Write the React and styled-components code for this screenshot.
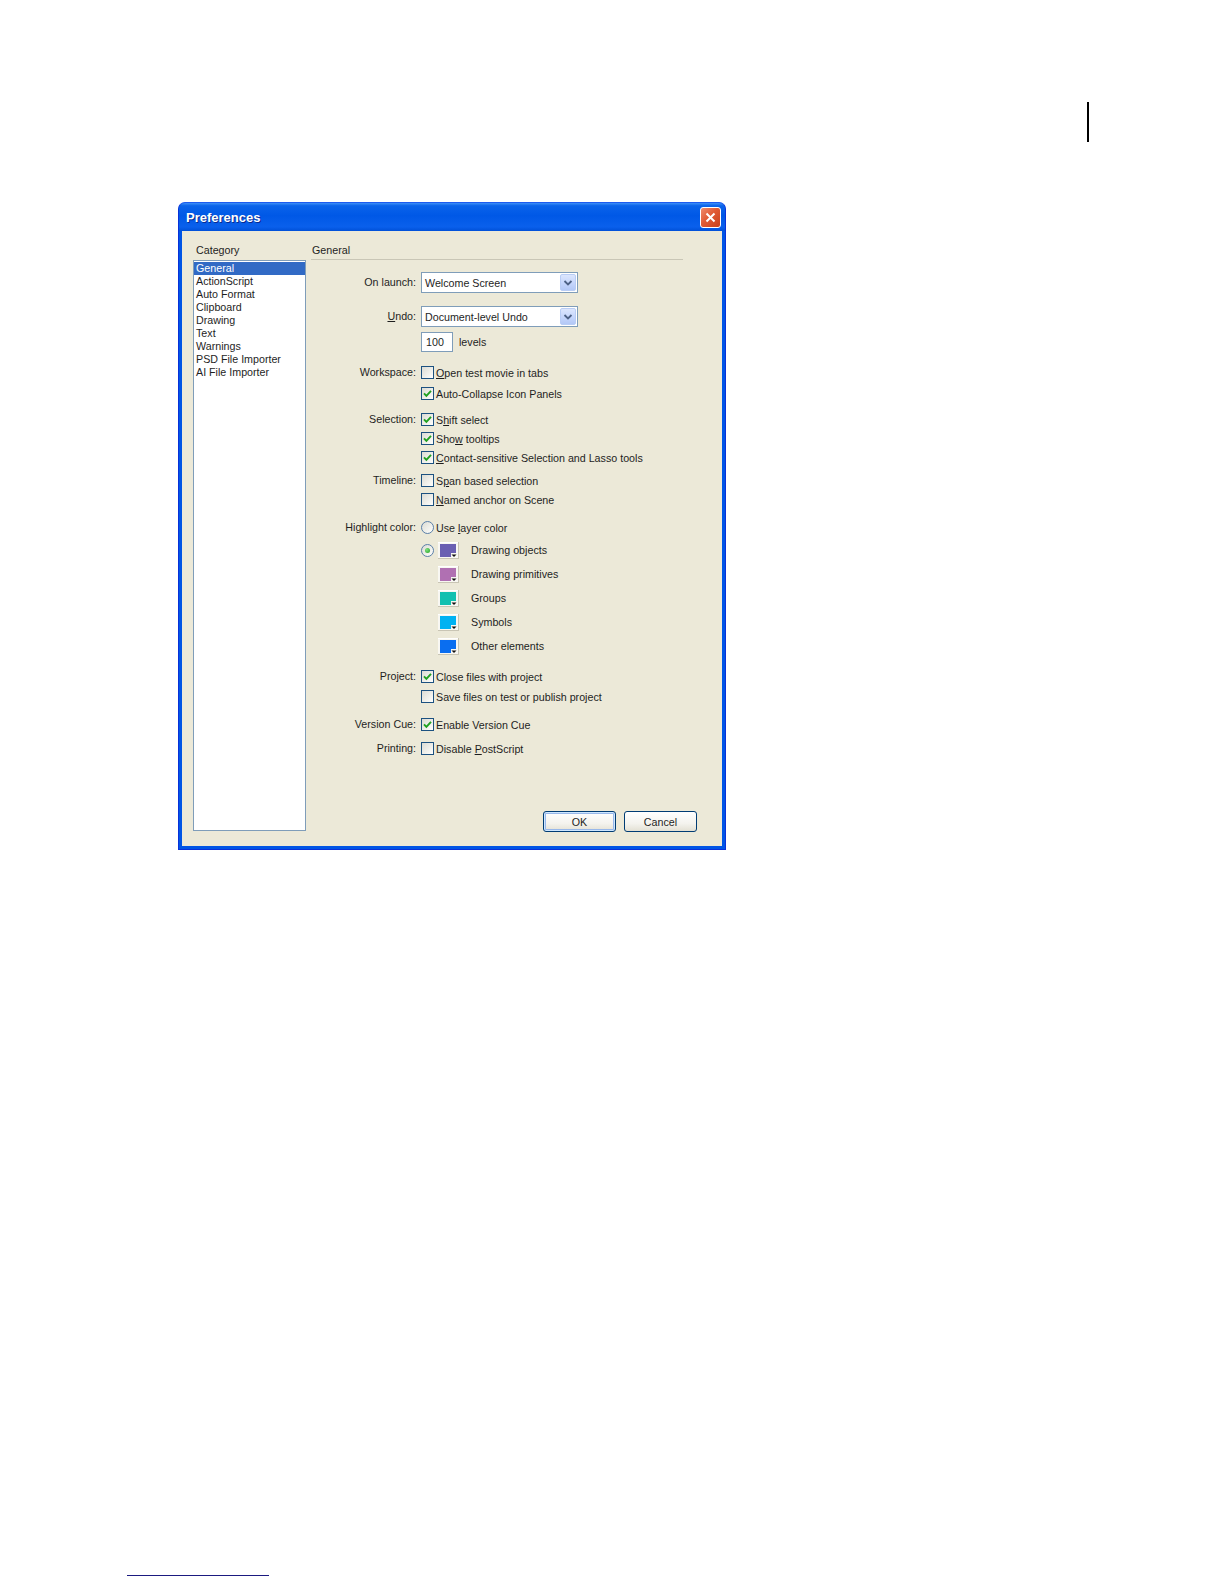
import React from "react";
import styled, { createGlobalStyle } from "styled-components";

const GlobalStyle = createGlobalStyle`
  html, body { margin: 0; padding: 0; background: #fff; }
  body { font-family: "Liberation Sans", Arial, sans-serif; color: #1e1e1e; }
`;

const Page = styled.div`
  width: 1224px;
  min-height: 1584px;
  display: flex;
  flex-direction: column;
`;

const HeaderMark = styled.div`
  margin: 102px 0 0 1087px;
  width: 2px;
  height: 40px;
  background: #000;
`;

const FootLine = styled.div`
  margin: 725px 0 0 127px;
  width: 142px;
  height: 1px;
  background: #1b1a80;
`;

const Dialog = styled.div`
  margin: 60px 0 0 178px;
  width: 548px;
  height: 648px;
  box-sizing: border-box;
  display: flex;
  flex-direction: column;
  background: #0055e5;
  border: 1px solid #0831d9;
  border-top-color: #1c5cf0;
  border-radius: 7px 7px 0 0;
`;

const TitleBar = styled.div`
  height: 28px;
  display: flex;
  align-items: center;
  padding: 0 4px 0 7px;
  border-radius: 6px 6px 0 0;
  background: linear-gradient(
    to bottom,
    #3d8ff7 0%,
    #0a63ea 10%,
    #0058e6 45%,
    #0a60ec 85%,
    #0050d8 100%
  );
`;

const Title = styled.span`
  font-weight: bold;
  font-size: 13px;
  color: #fff;
  text-shadow: 1px 1px 0 #0a2a90;
`;

const CloseButton = styled.div`
  margin-left: auto;
  width: 19px;
  height: 19px;
  border: 1px solid #fff;
  border-radius: 3px;
  display: flex;
  align-items: center;
  justify-content: center;
  background: linear-gradient(135deg, #ef8b6d 0%, #e05a34 45%, #c8401c 100%);
`;

const Body = styled.div`
  flex: 1;
  margin: 0 3px 3px;
  background: #ece9d8;
  display: flex;
  padding: 13px 25px 15px 11px;
`;

const LeftCol = styled.div`
  width: 113px;
  display: flex;
  flex-direction: column;
`;

const SmallText = styled.div`
  font-size: 10.7px;
  line-height: 12px;
`;

const CategoryLabel = styled(SmallText)`
  height: 16px;
  padding-left: 3px;
`;

const List = styled.div`
  flex: 1;
  background: #fff;
  border: 1px solid #7f9db9;
  padding-top: 1px;
`;

const ListItem = styled.div`
  height: 13px;
  line-height: 13px;
  font-size: 10.7px;
  padding-left: 2px;
  white-space: nowrap;
  background: ${(p) => (p.$selected ? "#316ac5" : "transparent")};
  color: ${(p) => (p.$selected ? "#fff" : "#1e1e1e")};
`;

const RightCol = styled.div`
  flex: 1;
  margin-left: 5px;
  display: flex;
  flex-direction: column;
`;

const PanelHeader = styled(SmallText)`
  width: 371px;
  height: 15px;
  padding-left: 1px;
  border-bottom: 1px solid #c9c6b6;
`;

const Row = styled.div`
  display: grid;
  grid-template-columns: 105px 1fr;
  column-gap: 5px;
  margin-top: ${(p) => p.$top}px;
`;

const RowLabel = styled.div`
  height: ${(p) => p.$h}px;
  line-height: ${(p) => p.$h}px;
  font-size: 10.7px;
  text-align: right;
  white-space: nowrap;
`;

const Stack = styled.div`
  display: flex;
  flex-direction: column;
  gap: ${(p) => p.$gap || 0}px;
  margin-top: ${(p) => p.$top || 0}px;
`;

const SelectBox = styled.div`
  width: 152px;
  height: 19px;
  border: 1px solid #7f9db9;
  background: #fff;
  display: flex;
  align-items: center;
  padding-left: 3px;
  font-size: 10.7px;
  white-space: nowrap;
`;

const SelectArrow = styled.div`
  margin-left: auto;
  margin-right: 1px;
  width: 16px;
  height: 17px;
  flex: none;
  border-radius: 2px;
  border: 1px solid #b9cdf5;
  box-sizing: border-box;
  background: linear-gradient(to bottom, #dce6fd 0%, #c3d4fb 60%, #b3c8f6 100%);
  display: flex;
  align-items: center;
  justify-content: center;
`;

const LevelsLine = styled.div`
  margin-top: 5px;
  height: 20px;
  display: flex;
  align-items: center;
  gap: 6px;
  font-size: 10.7px;
`;

const NumberField = styled.div`
  width: 26px;
  height: 18px;
  border: 1px solid #7f9db9;
  background: #fff;
  padding-left: 4px;
  line-height: 18px;
  font-size: 10.7px;
`;

const Line = styled.div`
  height: 19px;
  display: flex;
  align-items: center;
  gap: 2px;
  font-size: 10.7px;
  white-space: nowrap;
`;

const Box = styled.span`
  width: 11px;
  height: 11px;
  flex: none;
  border: 1px solid #1c5180;
  background: linear-gradient(135deg, #dcdcd4 0%, #f4f4f0 70%, #fff 100%);
  display: flex;
  align-items: center;
  justify-content: center;
`;

const RadioBall = styled(Box)`
  border-color: #5a7fa8;
  border-radius: 50%;
`;

const Dot = styled.span`
  width: 5px;
  height: 5px;
  border-radius: 50%;
  background: radial-gradient(circle at 35% 35%, #7fe07f, #21a121);
`;

const SwatchRow = styled.div`
  height: 24px;
  display: flex;
  align-items: center;
  font-size: 10.7px;
`;

const RadioSlot = styled.div`
  width: 13px;
  flex: none;
  display: flex;
`;

const SwatchButton = styled.span`
  margin-left: 4px;
  display: flex;
`;

const SwatchLabel = styled.span`
  margin-left: 12px;
`;

const ButtonRow = styled.div`
  margin-top: auto;
  margin-bottom: -1px;
  display: flex;
  justify-content: flex-end;
  gap: 8px;
`;

const Button = styled.div`
  width: 73px;
  height: 21px;
  box-sizing: border-box;
  border: 1px solid #003c74;
  border-radius: 3px;
  font-size: 10.7px;
  display: flex;
  align-items: center;
  justify-content: center;
  background: linear-gradient(to bottom, #fff 0%, #f4f3ee 60%, #e3e0d4 100%);
  box-shadow: ${(p) =>
    p.$default ? "inset 0 0 0 1px #cee7ff, inset 0 0 0 2px #98b8ea" : "none"};
`;

const Check = () => (
  <svg width="9" height="9" viewBox="0 0 9 9">
    <path d="M1 4.3 L3.4 6.8 L8 1.8" fill="none" stroke="#21a121" strokeWidth="1.9" />
  </svg>
);

const Checkbox = ({ checked, children }) => (
  <Line>
    <Box>{checked && <Check />}</Box>
    <span>{children}</span>
  </Line>
);

const Radio = ({ selected }) => <RadioBall>{selected && <Dot />}</RadioBall>;

const Swatch = ({ color }) => (
  <svg width="21" height="17" viewBox="0 0 21 17">
    <rect x="0" y="0" width="21" height="17" fill="#f8f7f2" />
    <rect x="0" y="0" width="21" height="1" fill="#fff" />
    <rect x="20" y="0" width="1" height="17" fill="#c9c5b4" />
    <rect x="0" y="16" width="21" height="1" fill="#c9c5b4" />
    <rect x="2" y="2" width="16" height="13" fill={color} />
    <rect x="13" y="11" width="6" height="5" fill="#f8f7f2" />
    <path d="M13.5 12.5 L18.5 12.5 L16 15 Z" fill="#111" />
  </svg>
);

const Select = ({ value }) => (
  <SelectBox>
    {value}
    <SelectArrow>
      <svg width="10" height="8" viewBox="0 0 10 8">
        <path d="M1.5 2 L5 5.5 L8.5 2" fill="none" stroke="#4d6185" strokeWidth="1.8" />
      </svg>
    </SelectArrow>
  </SelectBox>
);

const categories = [
  "General",
  "ActionScript",
  "Auto Format",
  "Clipboard",
  "Drawing",
  "Text",
  "Warnings",
  "PSD File Importer",
  "AI File Importer",
];

const swatches = [
  { color: "#6a5fb2", label: "Drawing objects", radio: true },
  { color: "#b070b2", label: "Drawing primitives" },
  { color: "#12c0b0", label: "Groups" },
  { color: "#00b2f2", label: "Symbols" },
  { color: "#0a6ef0", label: "Other elements" },
];

export default function App() {
  return (
    <Page>
      <GlobalStyle />
      <HeaderMark />
      <Dialog>
        <TitleBar>
          <Title>Preferences</Title>
          <CloseButton>
            <svg width="11" height="11" viewBox="0 0 11 11">
              <path d="M1.5 1.5 L9.5 9.5 M9.5 1.5 L1.5 9.5" stroke="#fff" strokeWidth="2" />
            </svg>
          </CloseButton>
        </TitleBar>
        <Body>
          <LeftCol>
            <CategoryLabel>Category</CategoryLabel>
            <List>
              {categories.map((c, i) => (
                <ListItem key={c} $selected={i === 0}>
                  {c}
                </ListItem>
              ))}
            </List>
          </LeftCol>
          <RightCol>
            <PanelHeader>General</PanelHeader>

            <Row $top={12}>
              <RowLabel $h={21}>On launch:</RowLabel>
              <Select value="Welcome Screen" />
            </Row>

            <Row $top={13}>
              <RowLabel $h={21}>
                <u>U</u>ndo:
              </RowLabel>
              <Stack>
                <Select value="Document-level Undo" />
                <LevelsLine>
                  <NumberField>100</NumberField>
                  levels
                </LevelsLine>
              </Stack>
            </Row>

            <Row $top={11}>
              <RowLabel $h={19}>Workspace:</RowLabel>
              <Stack $gap={2}>
                <Checkbox>
                  <u>O</u>pen test movie in tabs
                </Checkbox>
                <Checkbox checked>Auto-Collapse Icon Panels</Checkbox>
              </Stack>
            </Row>

            <Row $top={7}>
              <RowLabel $h={19}>Selection:</RowLabel>
              <Stack>
                <Checkbox checked>
                  S<u>h</u>ift select
                </Checkbox>
                <Checkbox checked>
                  Sho<u>w</u> tooltips
                </Checkbox>
                <Checkbox checked>
                  <u>C</u>ontact-sensitive Selection and Lasso tools
                </Checkbox>
              </Stack>
            </Row>

            <Row $top={4}>
              <RowLabel $h={19}>Timeline:</RowLabel>
              <Stack>
                <Checkbox>
                  S<u>p</u>an based selection
                </Checkbox>
                <Checkbox>
                  <u>N</u>amed anchor on Scene
                </Checkbox>
              </Stack>
            </Row>

            <Row $top={9}>
              <RowLabel $h={19}>Highlight color:</RowLabel>
              <Stack>
                <Line>
                  <Radio />
                  <span>
                    Use <u>l</u>ayer color
                  </span>
                </Line>
                <Stack $top={1}>
                  {swatches.map((s) => (
                    <SwatchRow key={s.label}>
                      <RadioSlot>{s.radio && <Radio selected />}</RadioSlot>
                      <SwatchButton>
                        <Swatch color={s.color} />
                      </SwatchButton>
                      <SwatchLabel>{s.label}</SwatchLabel>
                    </SwatchRow>
                  ))}
                </Stack>
              </Stack>
            </Row>

            <Row $top={9}>
              <RowLabel $h={19}>Project:</RowLabel>
              <Stack $gap={1}>
                <Checkbox checked>Close files with project</Checkbox>
                <Checkbox>Save files on test or publish project</Checkbox>
              </Stack>
            </Row>

            <Row $top={9}>
              <RowLabel $h={19}>Version Cue:</RowLabel>
              <Checkbox checked>Enable Version Cue</Checkbox>
            </Row>

            <Row $top={5}>
              <RowLabel $h={19}>Printing:</RowLabel>
              <Checkbox>
                Disable <u>P</u>ostScript
              </Checkbox>
            </Row>

            <ButtonRow>
              <Button $default>OK</Button>
              <Button>Cancel</Button>
            </ButtonRow>
          </RightCol>
        </Body>
      </Dialog>
      <FootLine />
    </Page>
  );
}
